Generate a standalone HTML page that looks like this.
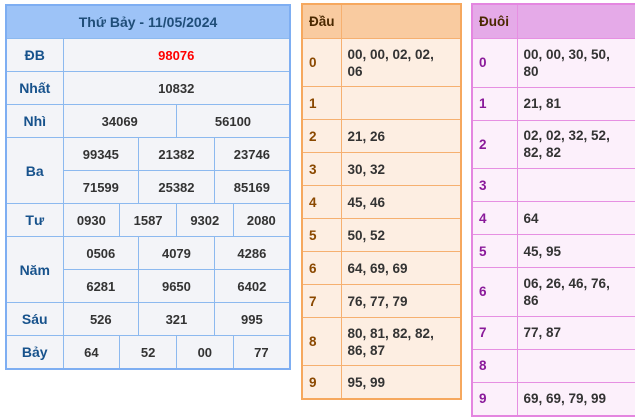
<!DOCTYPE html>
<html><head><meta charset="utf-8"><style>
body{margin:0;background:#fff;font-family:"Liberation Sans",Arial,sans-serif;font-weight:bold;font-size:13px;}
table{border-collapse:collapse;table-layout:fixed;position:absolute;}
td{padding:0;}
#L{left:5px;top:4px;width:286px;border:2px solid #7eaef2;background:#f3f4f8;}
#L td{border:1px solid #8cb9ef;text-align:center;color:#333;height:32px;}
#L td.h{background:#9dc3f7;color:#1f4d78;font-size:14px;height:32px;}
#L td.l{color:#17528c;font-size:14px;}
#M{left:301px;top:3px;width:161px;border:2px solid #f6a85e;background:#fdeee2;}
#M td{border:1px solid #f6b070;color:#333;height:32px;padding-left:6px;line-height:17px;font-size:13.5px;}
#M td.d{color:#8a4800;}
#M tr.h td{background:#f9cba0;color:#4a2800;height:33px;}
#R{left:471px;top:3px;width:166px;border:2px solid #e486e0;background:#fcf0fb;}
#R td{border:1px solid #e690e2;color:#333;height:32px;padding-left:6px;line-height:17px;font-size:13.5px;}
#R td.d{color:#8a1a9a;}
#R tr.h td{background:#e5aae8;color:#4a2800;height:33px;}
#M td.t{height:47px;}
#R td.t{height:47.6px;}
</style></head><body>
<table id="L"><colgroup><col style="width:57px"><col span="12"></colgroup>
<tr><td class="h" colspan="13">Thứ Bảy - 11/05/2024</td></tr>
<tr><td class="l">ĐB</td><td colspan="12" style="color:#f00">98076</td></tr>
<tr><td class="l">Nhất</td><td colspan="12">10832</td></tr>
<tr><td class="l">Nhì</td><td colspan="6">34069</td><td colspan="6">56100</td></tr>
<tr><td class="l" rowspan="2">Ba</td><td colspan="4">99345</td><td colspan="4">21382</td><td colspan="4">23746</td></tr>
<tr><td colspan="4">71599</td><td colspan="4">25382</td><td colspan="4">85169</td></tr>
<tr><td class="l">Tư</td><td colspan="3">0930</td><td colspan="3">1587</td><td colspan="3">9302</td><td colspan="3">2080</td></tr>
<tr><td class="l" rowspan="2">Năm</td><td colspan="4">0506</td><td colspan="4">4079</td><td colspan="4">4286</td></tr>
<tr><td colspan="4">6281</td><td colspan="4">9650</td><td colspan="4">6402</td></tr>
<tr><td class="l">Sáu</td><td colspan="4">526</td><td colspan="4">321</td><td colspan="4">995</td></tr>
<tr><td class="l">Bảy</td><td colspan="3">64</td><td colspan="3">52</td><td colspan="3">00</td><td colspan="3">77</td></tr>
</table>
<table id="M"><colgroup><col style="width:39px"><col></colgroup>
<tr class="h"><td>Đầu</td><td></td></tr>
<tr><td class="d t">0</td><td class="t">00, 00, 02, 02,<br>06</td></tr>
<tr><td class="d">1</td><td></td></tr>
<tr><td class="d">2</td><td>21, 26</td></tr>
<tr><td class="d">3</td><td>30, 32</td></tr>
<tr><td class="d">4</td><td>45, 46</td></tr>
<tr><td class="d">5</td><td>50, 52</td></tr>
<tr><td class="d">6</td><td>64, 69, 69</td></tr>
<tr><td class="d">7</td><td>76, 77, 79</td></tr>
<tr><td class="d t">8</td><td class="t">80, 81, 82, 82,<br>86, 87</td></tr>
<tr><td class="d">9</td><td>95, 99</td></tr>
</table>
<table id="R"><colgroup><col style="width:45px"><col></colgroup>
<tr class="h"><td>Đuôi</td><td></td></tr>
<tr><td class="d t">0</td><td class="t">00, 00, 30, 50,<br>80</td></tr>
<tr><td class="d">1</td><td>21, 81</td></tr>
<tr><td class="d t">2</td><td class="t">02, 02, 32, 52,<br>82, 82</td></tr>
<tr><td class="d">3</td><td></td></tr>
<tr><td class="d">4</td><td>64</td></tr>
<tr><td class="d">5</td><td>45, 95</td></tr>
<tr><td class="d t">6</td><td class="t">06, 26, 46, 76,<br>86</td></tr>
<tr><td class="d">7</td><td>77, 87</td></tr>
<tr><td class="d">8</td><td></td></tr>
<tr><td class="d">9</td><td>69, 69, 79, 99</td></tr>
</table>
</body></html>
